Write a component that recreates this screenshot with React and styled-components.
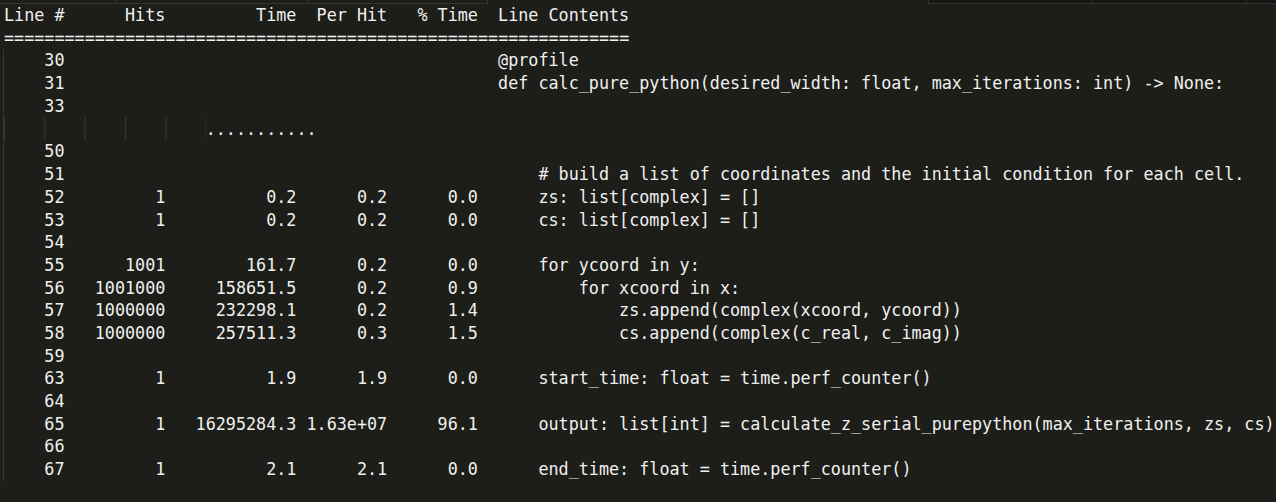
import styled, { createGlobalStyle } from "styled-components";

const GlobalStyle = createGlobalStyle`
  html, body {
    margin: 0;
    padding: 0;
    background: #1d1d1a;
  }
  body {
    font-family: "DejaVu Sans Mono", "Liberation Mono", monospace;
    color: #f0f0ee;
  }
`;

const Screen = styled.div`
  width: 1276px;
  height: 502px;
  overflow: hidden;
  background: #1d1d1a;
`;

const TabStrip = styled.div`
  display: flex;
  height: 4px;
`;

const TabGroup = styled.div`
  display: flex;
  margin-left: ${(p) => p.$offset || 0}px;
  flex: ${(p) => (p.$grow ? 1 : "none")};
  background: ${(p) => (p.$dark ? "#151513" : "transparent")};
  border-left: ${(p) => (p.$dark ? "1px solid #3a3a37" : "none")};
`;

const Tab = styled.div`
  box-sizing: border-box;
  width: ${(p) => (p.$width ? `${p.$width}px` : "auto")};
  flex: ${(p) => (p.$width ? "none" : 1)};
  height: 4px;
  border-bottom: 1px solid #343431;
  border-right: ${(p) => (p.$last ? "none" : "1px solid #343431")};
`;

const Terminal = styled.div`
  padding: 0 0 0 4px;
  font-size: 16.75px;
  line-height: 22.7px;
  white-space: pre;
`;

const Row = styled.div`
  display: grid;
  grid-template-columns: 6ch 9ch 12ch 8ch 8ch auto;
  column-gap: 1ch;
  height: 22.7px;
`;

const Cell = styled.span`
  text-align: right;
`;

const Code = styled.span`
  margin-left: 1ch;
  text-align: left;
`;

const Rule = styled.div`
  height: 22.7px;
`;

const Body = styled.div`
  background: linear-gradient(#363633, #363633) no-repeat 0 0 / 1px 100%;
  margin-left: -1px;
  padding-left: 1px;
`;

const SkipRow = styled.div`
  display: flex;
  height: 23px;
  align-items: center;
`;

const Guides = styled.span`
  width: 20ch;
  height: 23px;
  background: linear-gradient(to right, #363633 1px, transparent 1px) 0 0 / 4ch 100% repeat-x;
`;

const Dots = styled.span`
  height: 22.7px;
`;

const rows = [
  ["30", "", "", "", "", "@profile"],
  ["31", "", "", "", "", "def calc_pure_python(desired_width: float, max_iterations: int) -> None:"],
  ["33", "", "", "", "", ""],
  "skip",
  ["50", "", "", "", "", ""],
  ["51", "", "", "", "", "    # build a list of coordinates and the initial condition for each cell."],
  ["52", "1", "0.2", "0.2", "0.0", "    zs: list[complex] = []"],
  ["53", "1", "0.2", "0.2", "0.0", "    cs: list[complex] = []"],
  ["54", "", "", "", "", ""],
  ["55", "1001", "161.7", "0.2", "0.0", "    for ycoord in y:"],
  ["56", "1001000", "158651.5", "0.2", "0.9", "        for xcoord in x:"],
  ["57", "1000000", "232298.1", "0.2", "1.4", "            zs.append(complex(xcoord, ycoord))"],
  ["58", "1000000", "257511.3", "0.3", "1.5", "            cs.append(complex(c_real, c_imag))"],
  ["59", "", "", "", "", ""],
  ["63", "1", "1.9", "1.9", "0.0", "    start_time: float = time.perf_counter()"],
  ["64", "", "", "", "", ""],
  ["65", "1", "16295284.3", "1.63e+07", "96.1", "    output: list[int] = calculate_z_serial_purepython(max_iterations, zs, cs)"],
  ["66", "", "", "", "", ""],
  ["67", "1", "2.1", "2.1", "0.0", "    end_time: float = time.perf_counter()"],
];

const ProfileRow = ({ cells }) => {
  const [num, hits, time, perHit, pct, code] = cells;
  return (
    <Row>
      <Cell>{num}</Cell>
      <Cell>{hits}</Cell>
      <Cell>{time}</Cell>
      <Cell>{perHit}</Cell>
      <Cell>{pct}</Cell>
      <Code>{code}</Code>
    </Row>
  );
};

export default function App() {
  return (
    <Screen>
      <GlobalStyle />
      <TabStrip>
        <TabGroup>
          <Tab $width={116} />
          <Tab $width={192} />
          <Tab $width={180} />
        </TabGroup>
        <TabGroup $offset={440} $grow $dark>
          <Tab $width={163} />
          <Tab $width={155} />
          <Tab $last />
        </TabGroup>
      </TabStrip>
      <Terminal>
        <ProfileRow cells={["Line #", "Hits", "Time", "Per Hit", "% Time", "Line Contents"]} />
        <Rule>{"=".repeat(62)}</Rule>
        <Body>
          {rows.map((r, i) =>
            r === "skip" ? (
              <SkipRow key={i}>
                <Guides />
                <Dots>...........</Dots>
              </SkipRow>
            ) : (
              <ProfileRow key={i} cells={r} />
            )
          )}
        </Body>
      </Terminal>
    </Screen>
  );
}
